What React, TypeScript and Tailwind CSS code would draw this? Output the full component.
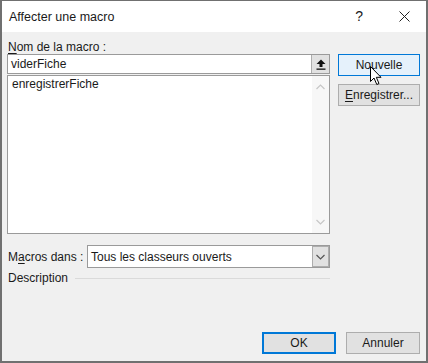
import React from 'react';

const FONT = { fontFamily: '"Liberation Sans", Arial, sans-serif' };

// Windows-style push button
const Btn = ({ children, variant = 'normal', className = '' }: { children: React.ReactNode; variant?: 'normal' | 'hover' | 'default'; className?: string }) => {
  let cls = 'bg-[#e1e1e1] border border-[#adadad]';
  if (variant === 'hover') cls = 'bg-[#e5f1fb] border border-[#0078d7]';
  if (variant === 'default') cls = 'bg-[#e1e1e1] border-2 border-[#0078d7]';
  return (
    <div className={`h-[22px] flex items-center justify-center text-[12px] text-[#1a1a1a] ${cls} ${className}`}>
      {children}
    </div>
  );
};

const Chevron = ({ dir, color }: { dir: 'up' | 'down'; color: string }) => (
  <svg width="9" height="6" viewBox="0 0 9 6">
    <polyline
      points={dir === 'up' ? '0.5,5 4.5,1 8.5,5' : '0.5,1 4.5,5 8.5,1'}
      fill="none"
      stroke={color}
      strokeWidth="1.2"
    />
  </svg>
);

export default function App() {
  return (
    <div style={FONT} className="relative w-[428px] h-[363px] bg-[#f0f0f0] border-t border-x-2 border-b-2 border-[#707070] flex flex-col text-[12px] text-[#1a1a1a] overflow-hidden">
      {/* Title bar */}
      <div className="h-[31px] bg-white flex items-center pl-[7px] pr-[16px]">
        <span className="text-[12.5px] pt-[1px]">Affecter une macro</span>
        <span className="ml-auto text-[14px] mr-[36px]">?</span>
        <svg width="11" height="11" viewBox="0 0 11 11">
          <path d="M0.5 0.5 L10.5 10.5 M10.5 0.5 L0.5 10.5" stroke="#222" strokeWidth="1" />
        </svg>
      </div>

      {/* Body */}
      <div className="flex-1 flex flex-col pl-[5px] pr-[6px] pt-[8px] pb-[7px]">
        <div className="flex gap-[8px]">
          {/* Left column */}
          <div className="w-[323px] flex flex-col">
            <div className="h-[14px] leading-[14px] pl-[1px]">
              <span className="underline underline-offset-2">N</span>om de la macro :
            </div>
            <div className="h-[20px] bg-white border border-[#9a9a9a] flex items-center">
              <span className="pl-[3px] flex-1">viderFiche</span>
              <div className="w-[18px] h-[18px] bg-[#e1e1e1] border-l border-[#adadad] flex items-center justify-center">
                <svg width="10" height="11" viewBox="0 0 10 11">
                  <path d="M5 0.5 L9.5 5 L6.5 5 L6.5 8 L3.5 8 L3.5 5 L0.5 5 Z" fill="#111" />
                  <rect x="0.5" y="9.5" width="9" height="1.3" fill="#111" />
                </svg>
              </div>
            </div>
            <div className="mt-[1px] h-[159px] bg-white border border-[#9a9a9a] flex">
              <div className="flex-1 pl-[4px] pt-[1px] leading-[15px]">enregistrerFiche</div>
              <div className="w-[17px] bg-[#f7f7f7] flex flex-col items-center justify-between py-[8px]">
                <Chevron dir="up" color="#c6c6c6" />
                <Chevron dir="down" color="#c6c6c6" />
              </div>
            </div>

            <div className="mt-[11px] flex items-center h-[23px]">
              <div className="w-[80px] pl-[1px]">
                M<span className="underline underline-offset-2">a</span>cros dans :
              </div>
              <div className="flex-1 h-[23px] bg-white border border-[#9a9a9a] flex items-center">
                <span className="pl-[3px] flex-1">Tous les classeurs ouverts</span>
                <div className="w-[17px] h-[21px] bg-[#e1e1e1] border border-[#adadad] flex items-center justify-center">
                  <Chevron dir="down" color="#555" />
                </div>
              </div>
            </div>

            <div className="mt-[2px] h-[16px] flex items-center">
              <span className="pl-[1px]">Description</span>
              <div className="flex-1 ml-[7px] border-t border-[#dadada] mt-[1px]" />
            </div>
          </div>

          {/* Right column */}
          <div className="w-[82px] flex flex-col gap-[8px] pt-[14px]">
            <Btn variant="hover">Nouvelle</Btn>
            <Btn>
              <span className="underline underline-offset-2">E</span>nregistrer...
            </Btn>
          </div>
        </div>

        <div className="mt-auto flex justify-end gap-[10px]">
          <Btn variant="default" className="w-[74px]">OK</Btn>
          <Btn className="w-[74px]">Annuler</Btn>
        </div>
      </div>

      {/* Mouse pointer over "Nouvelle" */}
      <svg className="absolute left-[368px] top-[65px]" width="13" height="20" viewBox="0 0 13 20">
        <path d="M0.5 0.5 L0.5 15.5 L4 12 L6.8 18.5 L9 17.5 L6.3 11.3 L11 11.3 Z" fill="white" stroke="black" strokeWidth="1" strokeLinejoin="miter" />
      </svg>
    </div>
  );
}
